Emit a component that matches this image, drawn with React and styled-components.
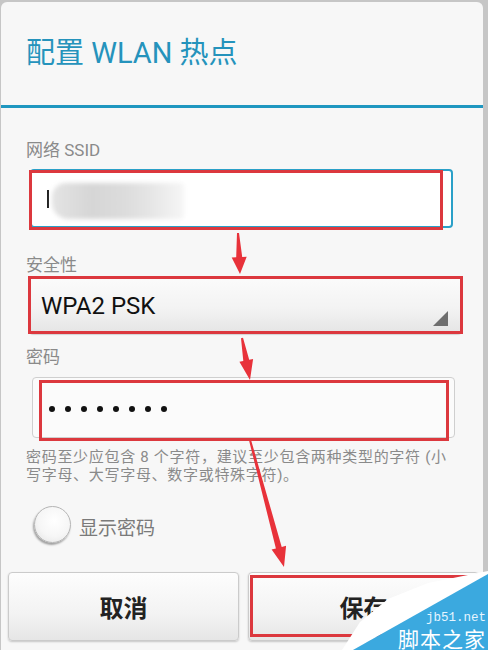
import React from "react";
import styled, { createGlobalStyle } from "styled-components";

const GlobalStyle = createGlobalStyle`
  html, body {
    margin: 0;
    padding: 0;
    background: #c6c6c6;
  }
  body {
    font-family: Roboto, "Noto Sans CJK SC", sans-serif;
  }
`;

// points for a tapered annotation arrow, from start to tip
function arrowPoints(x1, y1, x2, y2, headLen, headW, w0, w1) {
  const len = Math.hypot(x2 - x1, y2 - y1);
  const dx = (x2 - x1) / len;
  const dy = (y2 - y1) / len;
  const nx = -dy;
  const ny = dx;
  const bx = x2 - dx * headLen;
  const by = y2 - dy * headLen;
  const p = (x, y, w) => [x + (nx * w) / 2, y + (ny * w) / 2];
  const pts = [
    p(x1, y1, w0),
    p(bx, by, w1),
    p(bx, by, headW),
    [x2, y2],
    p(bx, by, -headW),
    p(bx, by, -w1),
    p(x1, y1, -w0),
  ];
  return pts.map((q) => q.map((v) => v.toFixed(1)).join(",")).join(" ");
}

const arrows = [
  [238, 233, 240, 274, 17, 15, 2, 6],
  [242, 338, 250, 380, 20, 14, 2, 6],
  [250, 440, 284, 567, 20, 15, 2, 6],
];

export default function App() {
  return (
    <>
      <GlobalStyle />
      <Page>
        <Dialog>
          <Header>
            <Titulo>配置 WLAN 热点</Titulo>
          </Header>
          <Divider />
          <Body>
            <Label>网络 SSID</Label>
            <SsidInput>
              <Caret />
              <Blur />
              <Highlight $l={-3} $t={-1} $w={414} $h={60} />
            </SsidInput>

            <Label $gap={27}>安全性</Label>
            <Select>
              WPA2 PSK
              <Corner />
              <Highlight $l={-2} $t={-1} $w={435} $h={58} />
            </Select>

            <Label $gap={13}>密码</Label>
            <PassInput>
              {Array.from({ length: 8 }).map((_, i) => (
                <Dot key={i} />
              ))}
              <Highlight $l={6} $t={2} $w={410} $h={61} />
            </PassInput>

            <Hint>
              <span>密码至少应包含 8 个字符，建议至少包含两种类型的字符 (小</span>
              <span>写字母、大写字母、数字或特殊字符)。</span>
            </Hint>

            <RadioRow>
              <Radio />
              <RadioText>显示密码</RadioText>
            </RadioRow>
          </Body>

          <Botones>
            <Boton>取消</Boton>
            <Boton>
              保存
              <Highlight $l={1} $t={2} $w={232} $h={62} />
            </Boton>
          </Botones>
        </Dialog>

        <Overlay viewBox="0 0 488 650" width="488" height="650">
          {arrows.map((a, i) => (
            <polygon key={i} points={arrowPoints(...a)} fill="#e8323a" />
          ))}
          <polygon
            points="342,650 360,622 388,599 428,583 488,571 488,575 353,650"
            fill="#ffffff"
          />
          <polygon points="353,650 488,574 488,650" fill="#3ba9df" />
        </Overlay>
        <Marca>
          <MarcaUrl>jb51.net</MarcaUrl>
          <MarcaNombre>脚本之家</MarcaNombre>
        </Marca>
      </Page>
    </>
  );
}

const Page = styled.div`
  position: relative;
  width: 488px;
  height: 650px;
  overflow: hidden;
  padding-top: 2px;
  box-sizing: border-box;
`;

const Dialog = styled.div`
  width: 482px;
  height: 648px;
  margin-left: 1px;
  background: #f7f7f7;
  border-radius: 6px 6px 0 0;
  display: flex;
  flex-direction: column;
`;

const Header = styled.div`
  height: 103px;
  display: flex;
  align-items: center;
  padding-left: 25px;
`;

const Titulo = styled.h1`
  margin: 0;
  font-size: 29px;
  font-weight: 400;
  color: #2593bc;
  line-height: 1;
`;

const Divider = styled.div`
  height: 3px;
  background: #1f97c0;
`;

const Body = styled.div`
  padding: 32px 26px 0 25px;
  display: flex;
  flex-direction: column;
`;

const Label = styled.div`
  font-size: 17px;
  line-height: 20px;
  color: #8a8a8a;
  margin-top: ${(p) => (p.$gap ? p.$gap : 0)}px;
`;

const Highlight = styled.div`
  position: absolute;
  left: ${(p) => p.$l}px;
  top: ${(p) => p.$t}px;
  width: ${(p) => p.$w}px;
  height: ${(p) => p.$h}px;
  border: 3px solid #dc383e;
  box-sizing: border-box;
  pointer-events: none;
`;

const SsidInput = styled.div`
  position: relative;
  margin: 9px 0 0 4px;
  width: 423px;
  height: 59px;
  box-sizing: border-box;
  background: #ffffff;
  border: 2px solid #2aa0c8;
  border-radius: 4px;
`;

const Caret = styled.div`
  position: absolute;
  left: 15px;
  top: 19px;
  width: 2px;
  height: 18px;
  background: #222;
`;

const Blur = styled.div`
  position: absolute;
  left: 20px;
  top: 12px;
  width: 132px;
  height: 36px;
  border-radius: 14px 4px 4px 16px;
  background: linear-gradient(
    90deg,
    #e4e4e4 0%,
    #d6d6d6 30%,
    #dcdcdc 55%,
    #e6e6e6 75%,
    #f6f6f6 100%
  );
  filter: blur(2px);
`;

const Select = styled.div`
  position: relative;
  margin: 2px 0 0 4px;
  width: 431px;
  height: 57px;
  box-sizing: border-box;
  padding: 0 0 0 11px;
  display: flex;
  align-items: center;
  font-size: 24px;
  color: #111;
  background: linear-gradient(180deg, #fbfbfb 0%, #f3f3f3 55%, #e4e4e4 100%);
  border-radius: 3px;
  box-shadow: 0 1px 1px rgba(0, 0, 0, 0.15);
`;

const Corner = styled.div`
  position: absolute;
  right: 13px;
  bottom: 8px;
  width: 0;
  height: 0;
  border-left: 15px solid transparent;
  border-bottom: 15px solid #6e6e6e;
`;

const PassInput = styled.div`
  position: relative;
  margin: 10px 0 0 6px;
  width: 423px;
  height: 61px;
  box-sizing: border-box;
  padding: 2px 0 0 16px;
  display: flex;
  align-items: center;
  gap: 10px;
  background: #fbfbfb;
  border: 1px solid #cfcfcf;
  border-radius: 4px;
`;

const Dot = styled.span`
  width: 6px;
  height: 6px;
  border-radius: 50%;
  background: #111;
`;

const Hint = styled.div`
  margin-top: 10px;
  font-size: 15px;
  line-height: 18px;
  color: #8a8a8a;
  display: flex;
  flex-direction: column;
  white-space: nowrap;
  letter-spacing: 0.7px;
`;

const RadioRow = styled.div`
  margin: 18px 0 0 8px;
  height: 44px;
  display: flex;
  align-items: center;
  gap: 8px;
`;

const Radio = styled.div`
  width: 35px;
  height: 35px;
  border-radius: 50%;
  background: radial-gradient(circle at 55% 40%, #ffffff 0%, #f6f6f6 55%, #e2e2e2 100%);
  border: 1px solid #b5b5b5;
  box-shadow: -1px 2px 2px rgba(0, 0, 0, 0.35);
`;

const RadioText = styled.span`
  font-size: 19px;
  color: #7a7a7a;
  padding-top: 4px;
`;

const Botones = styled.div`
  margin-top: 26px;
  padding: 0 4px 0 7px;
  display: grid;
  grid-template-columns: 1fr 1fr;
  gap: 9px;
`;

const Boton = styled.div`
  position: relative;
  height: 69px;
  display: flex;
  align-items: center;
  justify-content: center;
  font-size: 24px;
  font-weight: 700;
  color: #222;
  background: linear-gradient(180deg, #fdfdfd 0%, #f3f3f3 60%, #e6e6e6 100%);
  border: 1px solid #cbcbcb;
  border-radius: 4px;
  box-shadow: 0 1px 2px rgba(0, 0, 0, 0.2);
  box-sizing: border-box;
`;

const Overlay = styled.svg`
  position: absolute;
  left: 0;
  top: 0;
  pointer-events: none;
`;

const Marca = styled.div`
  position: absolute;
  right: 2px;
  bottom: 1px;
  display: flex;
  flex-direction: column;
  align-items: flex-end;
  gap: 2px;
`;

const MarcaUrl = styled.div`
  font-family: "Liberation Mono", monospace;
  font-size: 12.5px;
  line-height: 13px;
  color: #e6f5ff;
`;

const MarcaNombre = styled.div`
  font-family: "Noto Sans CJK SC", sans-serif;
  font-size: 21px;
  line-height: 22px;
  letter-spacing: 1px;
  color: #ffffff;
  white-space: nowrap;
`;
